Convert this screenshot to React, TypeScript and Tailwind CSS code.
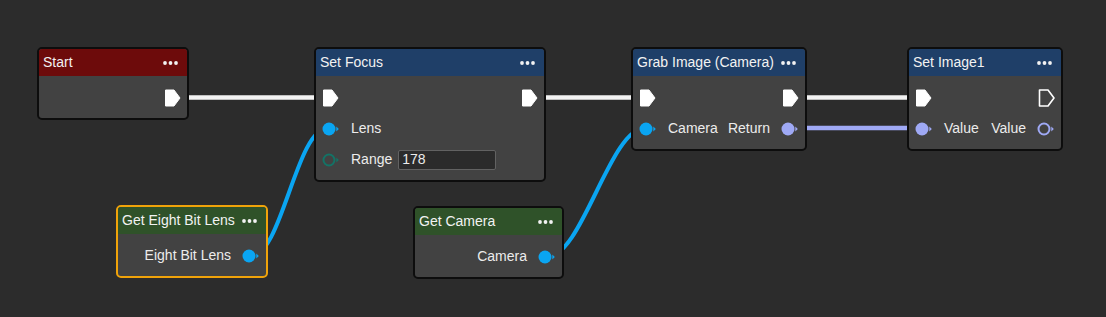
import React from 'react';

const BLUE = '#0aa5f2';
const PURPLE = '#9fa9f5';
const TEAL = '#137366';

const ExecPin = ({ hollow = false }: { hollow?: boolean }) => (
  <svg width="17" height="18" viewBox="0 0 17 18" className="shrink-0">
    <path
      d="M1.5 1H10L16 9L10 17H1.5Z"
      fill={hollow ? 'none' : '#ffffff'}
      stroke="#ffffff"
      strokeWidth={hollow ? 1.6 : 1}
      strokeLinejoin="round"
    />
  </svg>
);

const DataPin = ({ color, hollow = false }: { color: string; hollow?: boolean }) => (
  <svg width="18" height="14" viewBox="0 0 18 14" className="shrink-0">
    {hollow ? (
      <circle cx="7" cy="7" r="5.5" fill="none" stroke={color} strokeWidth="2" />
    ) : (
      <circle cx="7" cy="7" r="6.5" fill={color} />
    )}
    <path d="M14.3 4.6L16.8 7L14.3 9.4Z" fill={color} />
  </svg>
);

const Dots = () => (
  <svg width="15" height="4" viewBox="0 0 15 4" className="shrink-0">
    <circle cx="2" cy="2" r="1.9" fill="#f2f2f2" />
    <circle cx="7.5" cy="2" r="1.9" fill="#f2f2f2" />
    <circle cx="13" cy="2" r="1.9" fill="#f2f2f2" />
  </svg>
);

interface NodeProps {
  pos: string;
  title: string;
  header: string;
  border?: string;
  children: React.ReactNode;
}

const Node: React.FC<NodeProps> = ({ pos, title, header, border = 'border-[#0d0d0d]', children }) => (
  <div className={`absolute ${pos} rounded-[5px] border-2 ${border} bg-[#424242] overflow-hidden`}>
    <div className={`flex h-[27px] items-center justify-between pl-[4px] pr-[9px] ${header}`}>
      <span className="text-[14px] text-[#f2f2f2]">{title}</span>
      <Dots />
    </div>
    <div className="px-[6px] pt-[6px] pb-[5px]">{children}</div>
  </div>
);

const Row: React.FC<{ className?: string; children: React.ReactNode }> = ({ className = '', children }) => (
  <div className={`flex h-[31px] items-center ${className}`}>{children}</div>
);

const Label = ({ children }: { children: React.ReactNode }) => (
  <span className="text-[14px] text-[#ececec]">{children}</span>
);

export default function App() {
  return (
    <div className="relative h-[317px] w-[1106px] overflow-hidden bg-[#2c2c2c] font-['Liberation_Sans',Arial,sans-serif]">
      <svg width="1106" height="317" className="absolute inset-0">
        <g fill="none" strokeLinecap="butt">
          <path d="M175 97.5H325" stroke="#f2f2f2" strokeWidth="4.5" />
          <path d="M530 97.5H640" stroke="#f2f2f2" strokeWidth="4.5" />
          <path d="M795 97.5H920" stroke="#f2f2f2" strokeWidth="4.5" />
          <path d="M790 128H920" stroke={PURPLE} strokeWidth="4.5" />
          <path d="M250 257C282 257 296 128 328 128" stroke={BLUE} strokeWidth="4" />
          <path d="M547 257C582 257 610 128 645 128" stroke={BLUE} strokeWidth="4" />
        </g>
      </svg>

      <Node pos="left-[37px] top-[47px] w-[152px]" title="Start" header="bg-[#6d0b0b]">
        <Row className="justify-end">
          <ExecPin />
        </Row>
      </Node>

      <Node pos="left-[314px] top-[47px] w-[232px]" title="Set Focus" header="bg-[#1f3f68]">
        <Row className="justify-between">
          <ExecPin />
          <ExecPin />
        </Row>
        <Row className="gap-[11px]">
          <DataPin color={BLUE} />
          <Label>Lens</Label>
        </Row>
        <Row className="gap-[11px]">
          <DataPin color={TEAL} hollow />
          <Label>Range</Label>
          <div className="-ml-[5px] flex h-[20px] w-[98px] items-center rounded-[2px] border border-[#626262] bg-[#2b2b2b] px-[3px] text-[14px] text-[#ececec]">
            178
          </div>
        </Row>
      </Node>

      <Node pos="left-[631px] top-[47px] w-[176px]" title="Grab Image (Camera)" header="bg-[#1f3f68]">
        <Row className="justify-between">
          <ExecPin />
          <ExecPin />
        </Row>
        <Row className="justify-between">
          <div className="flex items-center gap-[11px]">
            <DataPin color={BLUE} />
            <Label>Camera</Label>
          </div>
          <div className="flex items-center gap-[11px]">
            <Label>Return</Label>
            <DataPin color={PURPLE} />
          </div>
        </Row>
      </Node>

      <Node pos="left-[907px] top-[47px] w-[156px]" title="Set Image1" header="bg-[#1f3f68]">
        <Row className="justify-between">
          <ExecPin />
          <ExecPin hollow />
        </Row>
        <Row className="justify-between">
          <div className="flex items-center gap-[11px]">
            <DataPin color={PURPLE} />
            <Label>Value</Label>
          </div>
          <div className="flex items-center gap-[11px]">
            <Label>Value</Label>
            <DataPin color={PURPLE} hollow />
          </div>
        </Row>
      </Node>

      <Node
        pos="left-[116px] top-[205px] w-[152px]"
        title="Get Eight Bit Lens"
        header="bg-[#2f5229]"
        border="border-[#f0a30a]"
      >
        <Row className="justify-end gap-[11px]">
          <Label>Eight Bit Lens</Label>
          <DataPin color={BLUE} />
        </Row>
      </Node>

      <Node pos="left-[413px] top-[206px] w-[151px]" title="Get Camera" header="bg-[#2f5229]">
        <Row className="justify-end gap-[11px]">
          <Label>Camera</Label>
          <DataPin color={BLUE} />
        </Row>
      </Node>
    </div>
  );
}
